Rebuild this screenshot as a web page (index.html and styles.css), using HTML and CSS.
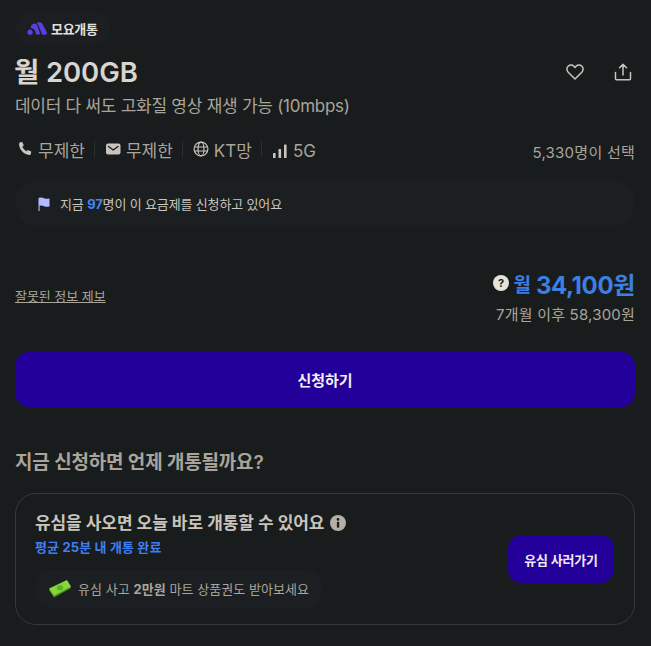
FILE: index.html
```html
<!DOCTYPE html>
<html lang="ko">
<head>
<meta charset="utf-8">
<title>월 200GB</title>
<link rel="stylesheet" href="styles.css">
</head>
<body>
<main class="page">
  <div class="brand">
    <svg class="brand-logo" viewBox="0 0 22 14" width="21" height="13"><circle cx="3" cy="11" r="2.8" fill="#5a3fe0"/><path d="M3.500 6.500C3.500 2 9 -.5 11 4l3 9.500H9.500C9 9 6.500 6.500 3.500 6.500Z" fill="#5a3fe0"/><path d="M10 1.500C12-.5 15.500-.2 16.500 2.500L21 11c.5 1.500-.5 2.700-2 2.700h-3L12 3.500c-.5-1-1-1.500-2-2Z" fill="#5a3fe0"/></svg>
    <span>모요개통</span>
  </div>

  <div class="title-row">
    <h1>월 200GB</h1>
    <div class="actions">
      <svg viewBox="0 0 20 20" width="20" height="20" fill="none" stroke="#c9c4bc" stroke-width="1.500"><path d="M10 17 3.200 10.200C1.500 8.400 1.500 5.700 3.100 4.200 4.700 2.700 7.300 2.700 8.900 4.300L10 5.500l1.100-1.200c1.600-1.600 4.200-1.600 5.800-.1 1.600 1.500 1.600 4.200-.1 6L10 17Z" stroke-linejoin="round"/></svg>
      <svg viewBox="0 0 20 20" width="20" height="20" fill="none" stroke="#c9c4bc" stroke-width="1.500" stroke-linecap="round" stroke-linejoin="round"><path d="M10 13V2.500M6.500 5.700 10 2.300l3.500 3.400M2.500 10.500v6.200c0 .6.400 1 1 1h13c.6 0 1-.4 1-1v-6.200"/></svg>
    </div>
  </div>
  <p class="subtitle">데이터 다 써도 고화질 영상 재생 가능 (10mbps)</p>

  <div class="specs">
    <ul class="spec-list">
      <li><svg viewBox="0 0 16 16" width="16" height="16"><path d="M3.200 1.200 5.300 1l1.500 3.400-1.400 1.400c.7 1.900 2.100 3.500 4 4.400l1.500-1.300 3.300 1.700-.3 2.200c-.2.800-.9 1.300-1.700 1.200C6.600 13.300 2.300 8.700 2 3c0-.9.400-1.500 1.200-1.800Z" fill="#c9c4bc"/></svg>무제한</li>
      <li><svg viewBox="0 0 16 16" width="16" height="16"><rect x="1" y="2.500" width="14.500" height="11" rx="2" fill="#c9c4bc"/><path d="M3.500 5.500 8.200 9l4.800-3.500" fill="none" stroke="#181c1e" stroke-width="1.400" stroke-linecap="round" stroke-linejoin="round"/></svg>무제한</li>
      <li><svg viewBox="0 0 16 16" width="16" height="16" fill="none" stroke="#c9c4bc" stroke-width="1.200"><circle cx="8" cy="8" r="6.900"/><ellipse cx="8" cy="8" rx="3" ry="6.900"/><path d="M1.300 6h13.400M1.300 10h13.400"/></svg>KT망</li>
      <li><svg viewBox="0 0 16 16" width="16" height="16" fill="#c9c4bc"><rect x="1" y="10" width="2.600" height="5" rx=".6"/><rect x="6.500" y="6" width="2.600" height="9" rx=".6"/><rect x="12" y="1.500" width="2.600" height="13.500" rx=".6"/></svg>5G</li>
    </ul>
    <span class="picked">5,330명이 선택</span>
  </div>

  <div class="notice">
    <svg viewBox="0 0 14 14" width="14" height="14"><path d="M1.500 1C4 .2 5.500.6 7 1.200s3 .9 5.500.2v8C10 10.200 8.500 9.800 7 9.200S4 8.300 2.600 8.800V14H1.500V1Z" fill="#b3b9ff"/></svg>
    <span>지금 <strong>97</strong>명이 이 요금제를 신청하고 있어요</span>
  </div>

  <div class="price-row">
    <a class="report" href="#">잘못된 정보 제보</a>
    <div class="price">
      <div class="price-main">
        <svg viewBox="0 0 16 16" width="16" height="16"><circle cx="8" cy="8" r="8" fill="#e6e2dc"/><text x="8" y="12" text-anchor="middle" class="q-mark">?</text></svg>
        <span class="per">월</span><span class="amount">34,100원</span>
      </div>
      <div class="price-after">7개월 이후 58,300원</div>
    </div>
  </div>

  <button class="apply" type="button">신청하기</button>

  <h2>지금 신청하면 언제 개통될까요?</h2>

  <section class="card">
    <div class="card-text">
      <div class="card-title">유심을 사오면 오늘 바로 개통할 수 있어요
        <svg viewBox="0 0 16 16" width="16" height="16"><circle cx="8" cy="8" r="8" fill="#b5afa6"/><rect x="6.900" y="6.800" width="2.300" height="5.800" fill="#181c1e"/><circle cx="8" cy="4.400" r="1.300" fill="#181c1e"/></svg>
      </div>
      <div class="card-sub">평균 25분 내 개통 완료</div>
      <div class="promo">
        <svg viewBox="0 0 24 18" width="24" height="18"><path d="M1 10 19 1l4 7L6 17.500Z" fill="#4e9a1e"/><path d="M1 8.500 19 0l4 6.500L6 15.500Z" fill="#86d63a"/><ellipse cx="12" cy="7.800" rx="3.200" ry="2.600" fill="#5fae28"/></svg>
        <span>유심 사고 <b>2만원</b> 마트 상품권도 받아보세요</span>
      </div>
    </div>
    <button class="buy" type="button">유심 사러가기</button>
  </section>
</main>
</body>
</html>
```
FILE: styles.css
```css
* { box-sizing: border-box; }
html, body { margin: 0; padding: 0; }
body {
  background: #181c1d;
  color: #d6d1ca;
  font-family: Inter, "Noto Sans CJK KR", sans-serif;
  overflow: hidden;
}
.page { width: 651px; height: 646px; padding: 12px 16px 0 15px; }
.brand {
  display: inline-flex; align-items: center; gap: 3px;
  height: 32px; padding: 0 13px 0 12px;
  background: #1b1f21; border-radius: 16px;
  font-size: 13px; font-weight: 600; letter-spacing: -.3px; color: #e3dfd9;
}
.brand-logo { display: block; }
.title-row { display: flex; justify-content: space-between; align-items: center; margin-top: 8px; height: 40px; }
h1 { margin: 0 0 0 -1px; font-size: 27.500px; line-height: 40px; font-weight: 600; color: #d9d4cd; letter-spacing: -.1px; }
.actions { display: flex; gap: 28px; padding-right: 2px; }
.actions svg { display: block; }
.subtitle { margin: 0; font-size: 17px; line-height: 28px; color: #aaa49b; letter-spacing: -.27px; }
.specs { display: flex; justify-content: space-between; align-items: center; margin-top: 17px; height: 28px; }
.spec-list { display: flex; list-style: none; margin: 0; padding: 0 0 0 2px; }
.spec-list li {
  display: flex; align-items: center; gap: 5px;
  font-size: 17px; color: #aaa49b;
  padding-right: 9px; margin-right: 10px;
}
.spec-list li:not(:last-child) { border-right: 1px solid #2c3032; height: 16px; }
.picked { font-size: 15px; color: #aaa49b; letter-spacing: .25px; }
.notice {
  display: flex; align-items: center; gap: 9px;
  margin-top: 15px; height: 47px; padding: 0 22px;
  width: 620px;
  background: #1b1f21; border-radius: 24px;
  font-size: 13px; letter-spacing: -.15px; color: #c9c4bc;
}
.notice svg { flex: none; }
.notice span { margin-top: -1px; }
.notice strong { color: #3f86f5; font-weight: 700; }
.price-row { display: flex; justify-content: space-between; align-items: center; margin-top: 40px; width: 620px; }
.report { font-size: 13px; color: #aaa49b; text-decoration: underline; letter-spacing: -.05px; margin-top: -3px; }
.price { text-align: right; }
.price-main { display: flex; align-items: center; justify-content: flex-end; gap: 4px; height: 32px; color: #3d7fe3; font-weight: 700; }
.q-mark { font: 700 11px Inter, sans-serif; fill: #181c1e; }
.per { font-size: 19px; }
.amount { font-size: 24px; margin-left: 1px; letter-spacing: -.35px; }
.price-after { font-size: 15px; line-height: 24px; color: #aaa49b; margin-top: 4px; letter-spacing: .2px; }
.apply {
  display: block; width: 620px; height: 55px; margin-top: 25px;
  border: 0; border-radius: 14px; background: #24009b;
  color: #f0eeee; font: 700 15px Inter, "Noto Sans CJK KR", sans-serif; letter-spacing: -.1px;
}
h2 { margin: 43px 0 0; font-size: 19px; line-height: 26px; font-weight: 600; color: #aaa49b; letter-spacing: -.2px; }
.card {
  display: flex; align-items: center; justify-content: space-between;
  width: 620px; height: 132px; margin-top: 17px; padding: 0 20px 0 19px;
  border: 1px solid #35393b; border-radius: 21px;
}
.card-title { display: flex; align-items: center; gap: 6px; font-size: 17px; line-height: 24px; font-weight: 600; color: #c9c4bc; letter-spacing: -.1px; }
.card-sub { font-size: 13px; line-height: 18px; font-weight: 700; color: #3f7ff5; margin-top: 3px; letter-spacing: .15px; }
.promo {
  display: flex; width: fit-content; align-items: center; gap: 6px;
  height: 38px; margin: 14px 0 0 1px; padding: 0 12px;
  background: #1b1f21; border-radius: 14px;
  font-size: 13px; color: #aaa49b; letter-spacing: .05px;
}
.promo b { font-weight: 700; }
.buy {
  width: 106px; height: 48px; border: 0; border-radius: 14px;
  background: #24009b; color: #eeeaf0;
  font: 700 13px Inter, "Noto Sans CJK KR", sans-serif; letter-spacing: -.2px;
}
```
